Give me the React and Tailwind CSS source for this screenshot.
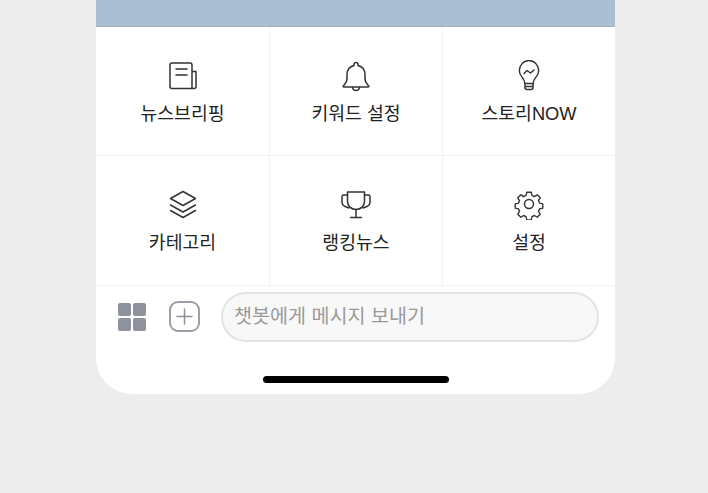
import React from "react";

const S = ({ children }) => (
  <svg width="32" height="32" viewBox="0 0 32 32" fill="none" stroke="#333" strokeWidth="1.5" strokeLinecap="round" strokeLinejoin="round">
    {children}
  </svg>
);

const icons = {
  news: (
    <S>
      <path d="M25 28.500H5a2 2 0 0 1-2-2V5a2 2 0 0 1 2-2h18a2 2 0 0 1 2 2v23.500zM25 11.500h4v15a2 2 0 0 1-2 2h-2" />
      <path d="M9 9h11M9 15h11" />
    </S>
  ),
  bell: (
    <S>
      <path d="M16 2.500a2 2 0 0 0-2 2v1C9 6.800 7 10 7 14.500v4.500c0 3-1.800 4.800-3.600 6.800-.5.6-.2 1.200.6 1.200h24c.8 0 1.100-.6.6-1.200C26.800 23.800 25 22 25 19v-4.500C25 10 23 6.800 18 5.500v-1a2 2 0 0 0-2-2z" />
      <path d="M12.500 27.500c.3 1.800 1.700 3 3.500 3s3.200-1.200 3.500-3" />
    </S>
  ),
  bulb: (
    <S>
      <path d="M11.500 23.500c0-3-1.200-4.200-2.800-6C7 15.700 5.500 13.800 5.500 11a10.500 10.500 0 0 1 21 0c0 2.800-1.500 4.700-3.200 6.500-1.600 1.800-2.800 3-2.800 6z" transform="translate(16 0) scale(0.92 1) translate(-16 0)" />
      <path d="M12 23.500v4a2 2 0 0 0 2 2h4a2 2 0 0 0 2-2v-4M12 26.500h8" />
      <path d="M11 13.500l3-3 3.500 2.500 3.500-3" />
    </S>
  ),
  layers: (
    <S>
      <path d="M16 3.500L28.500 10.500 16 17.500 3.500 10.500z" />
      <path d="M3.500 17L16 24 28.500 17" />
      <path d="M3.500 22.500L16 29.500 28.500 22.500" />
    </S>
  ),
  trophy: (
    <S>
      <path d="M7.500 4h17v9c0 5-3.500 8.500-8.500 8.500S7.500 18 7.500 13z" />
      <path d="M7.500 7H3.500A1.500 1.500 0 0 0 2 8.500v6c0 1.800.8 2.900 2.500 3.700l4.500 1.800M24.500 7h4A1.500 1.500 0 0 1 30 8.500v6c0 1.800-.8 2.900-2.500 3.700L23 20" />
      <path d="M16 21.500V29.500M10.500 29.500h11" />
    </S>
  ),
  gear: (
    <S>
      <path d="M13.600 3.200h4.800l.8 3.500 2.700 1.200 3-1.900 3.300 3.300-1.900 3 1.200 2.800 3.500.8v4.600l-3.500.8-1.200 2.800 1.900 3-3.300 3.300-3-1.900-2.700 1.200-.8 3.500h-4.800l-.8-3.500-2.700-1.200-3 1.900-3.300-3.300 1.900-3-1.200-2.800-3.500-.8v-4.600l3.500-.8 1.200-2.800-1.900-3 3.300-3.300 3 1.900 2.700-1.200z" transform="translate(16 16) scale(0.92) translate(-16 -16)" />
      <circle cx="16" cy="16" r="4.500" />
    </S>
  ),
};

const items = [
  ["news", "뉴스브리핑", "pt-[33px] border-r", "mt-[9px]"],
  ["bell", "키워드 설정", "pt-[33px] border-r", "mt-[9px]"],
  ["bulb", "스토리NOW", "pt-[33px]", "mt-[9px]"],
  ["layers", "카테고리", "pt-[32px] border-r", "mt-[10px]"],
  ["trophy", "랭킹뉴스", "pt-[32px] border-r", "mt-[10px]"],
  ["gear", "설정", "pt-[32px]", "mt-[10px]"],
];

const font = "font-['Liberation_Sans','Noto_Sans_CJK_KR',sans-serif]";

export default function App() {
  return (
    <div className={`w-[708px] h-[493px] bg-[#ededed] overflow-hidden pl-[96px] ${font}`}>
      <div className="w-[519px] h-[394px] bg-white rounded-b-[36px] flex flex-col overflow-hidden">
        <div className="h-[27px] shrink-0 bg-[#aabfd1] border-b border-[#9db0c0]" />
        <div className="grid grid-cols-[174px_173px_172px] h-[259px] shrink-0 grid-rows-[129px_130px]">
          {items.map(([k, label, cls, mt]) => (
            <div key={k} className={`flex flex-col items-center border-[#f3f3f3] border-b ${cls}`}>
              {icons[k]}
              <span className={`${mt} text-[18.3px] leading-[26px] text-[#222]`}>{label}</span>
            </div>
          ))}
        </div>
        <div className="flex items-center h-[56px] shrink-0 pt-[5px] pl-[22px] pr-[16px]">
          <div className="grid grid-cols-2 gap-[2px] w-[28px] h-[28px] shrink-0">
            <div className="bg-[#8e929c] rounded-[2px]" />
            <div className="bg-[#8e929c] rounded-[2px]" />
            <div className="bg-[#8e929c] rounded-[2px]" />
            <div className="bg-[#8e929c] rounded-[2px]" />
          </div>
          <div className="ml-[23px] w-[31px] h-[31px] shrink-0 rounded-[9px] border-2 border-[#9a9ea7] flex items-center justify-center">
            <svg width="17" height="17" viewBox="0 0 17 17" stroke="#8e929c" strokeWidth="1.5" strokeLinecap="round">
              <path d="M8.500 1v15M1 8.500h15" />
            </svg>
          </div>
          <div className="ml-[21px] flex-1 h-[50px] rounded-full border-2 border-[#e3e3e3] bg-[#f8f8f8] flex items-center pl-[11px] text-[19.6px] text-[#9a9a9a]">
            챗봇에게 메시지 보내기
          </div>
        </div>
        <div className="flex-1 flex justify-center pt-[34px]">
          <div className="w-[186px] h-[7px] rounded-full bg-black" />
        </div>
      </div>
    </div>
  );
}
